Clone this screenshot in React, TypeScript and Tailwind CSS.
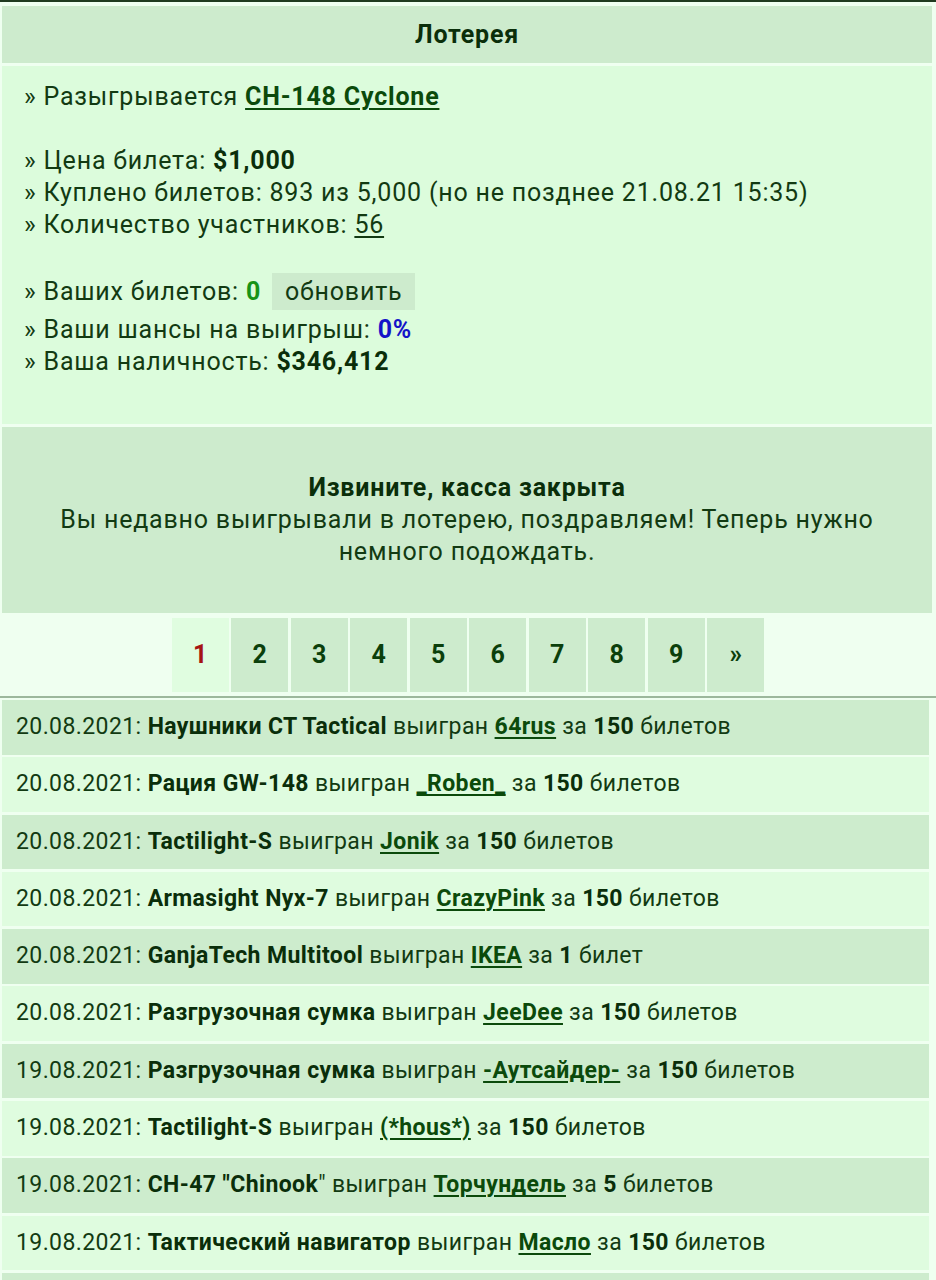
import React from 'react';

type Win = {
  date: string;
  item: string;
  tail?: string;
  user: string;
  count: string;
  word: string;
};

const wins: Win[] = [
  { date: '20.08.2021', item: 'Наушники CT Tactical', user: '64rus', count: '150', word: 'билетов' },
  { date: '20.08.2021', item: 'Рация GW-148', user: '_Roben_', count: '150', word: 'билетов' },
  { date: '20.08.2021', item: 'Tactilight-S', user: 'Jonik', count: '150', word: 'билетов' },
  { date: '20.08.2021', item: 'Armasight Nyx-7', user: 'CrazyPink', count: '150', word: 'билетов' },
  { date: '20.08.2021', item: 'GanjaTech Multitool', user: 'IKEA', count: '1', word: 'билет' },
  { date: '20.08.2021', item: 'Разгрузочная сумка', user: 'JeeDee', count: '150', word: 'билетов' },
  { date: '19.08.2021', item: 'Разгрузочная сумка', user: '-Аутсайдер-', count: '150', word: 'билетов' },
  { date: '19.08.2021', item: 'Tactilight-S', user: '(*hous*)', count: '150', word: 'билетов' },
  { date: '19.08.2021', item: 'CH-47 "Chinook', tail: '"', user: 'Торчундель', count: '5', word: 'билетов' },
  { date: '19.08.2021', item: 'Тактический навигатор', user: 'Масло', count: '150', word: 'билетов' },
];

const pages = ['1', '2', '3', '4', '5', '6', '7', '8', '9', '»'];

function Link({ children }: { children: React.ReactNode }) {
  return <a className="font-bold text-[#0b4a0b] underline decoration-2 underline-offset-[3px]">{children}</a>;
}

function B({ children }: { children: React.ReactNode }) {
  return <b className="font-bold text-[#0a2e0a]">{children}</b>;
}

export default function App() {
  return (
    <div
      className="h-[1280px] bg-[#effff0] text-[#123a12] border-t-2 border-[#1f3a1f] overflow-hidden"
      style={{ fontFamily: 'Roboto, "Noto Sans", sans-serif' }}
    >
      {/* lottery info block */}
      <div className="ml-[2px] mr-[4px] mt-[4px] flex flex-col gap-[3px] text-[25px] tracking-[0.8px]">
        <div className="h-[57px] bg-[#cdebcd] flex items-center justify-center font-bold text-[#0a2e0a]">
          Лотерея
        </div>

        <div className="h-[358px] bg-[#dcfcdc] pl-[22px] pt-[15px] leading-[32px]">
          <div>
            » Разыгрывается <Link>CH-148 Cyclone</Link>
          </div>
          <div className="h-[32px]" />
          <div>
            » Цена билета: <B>$1,000</B>
          </div>
          <div>» Куплено билетов: 893 из 5,000 (но не позднее 21.08.21 15:35)</div>
          <div>
            » Количество участников: <a className="underline underline-offset-[3px]">56</a>
          </div>
          <div className="h-[32px]" />
          <div className="flex items-center h-[37px]">
            <span>
              » Ваших билетов: <b className="font-bold text-[#179317]">0</b>
            </span>
            <span className="ml-[11px] h-[37px] px-[13px] bg-[#cdebcd] flex items-center">обновить</span>
          </div>
          <div className="mt-[4px]">
            » Ваши шансы на выигрыш: <b className="font-bold text-[#1414c8]">0%</b>
          </div>
          <div>
            » Ваша наличность: <B>$346,412</B>
          </div>
        </div>

        <div className="h-[186px] bg-[#cdebcd] flex flex-col items-center justify-center text-center leading-[32px]">
          <b className="font-bold text-[#0a2e0a]">Извините, касса закрыта</b>
          <span>
            Вы недавно выигрывали в лотерею, поздравляем! Теперь нужно
            <br />
            немного подождать.
          </span>
        </div>
      </div>

      {/* pager */}
      <div className="mt-[5px] flex justify-center gap-[2.5px]">
        {pages.map((p, i) => (
          <div
            key={p}
            className={`w-[57px] h-[74px] flex items-center justify-center text-[25px] font-bold ${
              i === 0 ? 'bg-[#e0fde0] text-[#a61414]' : 'bg-[#cdebcd] text-[#0b3f0b]'
            }`}
          >
            {p}
          </div>
        ))}
      </div>

      <div className="mt-[4px] h-[2px] bg-[#9cb89c]" />

      {/* winners */}
      <div className="mt-[2px] ml-[2px] mr-[7px] flex flex-col gap-[2.8px]">
        {wins.map((w, i) => (
          <div
            key={i}
            className={`h-[54.5px] shrink-0 flex items-center pl-[14px] text-[23px] tracking-[0.4px] whitespace-nowrap ${
              i % 2 === 0 ? 'bg-[#cdeccd]' : 'bg-[#dffcdf]'
            }`}
          >
            <span>
              {w.date}: <B>{w.item}</B>
              {w.tail}
              {' выигран '}
              <Link>{w.user}</Link>
              {' за '}
              <B>{w.count}</B> {w.word}
            </span>
          </div>
        ))}
        <div className="h-[54.5px] shrink-0 bg-[#cdeccd]" />
      </div>
    </div>
  );
}
